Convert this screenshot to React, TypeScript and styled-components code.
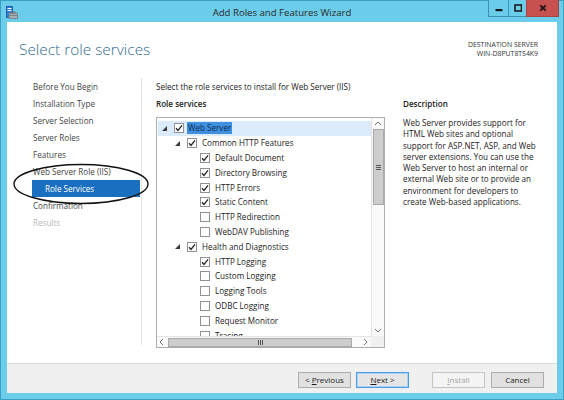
import React from "react";
import styled, { createGlobalStyle } from "styled-components";

const GlobalStyle = createGlobalStyle`
  html, body { margin: 0; padding: 0; width: 564px; height: 400px; overflow: hidden; }
  body { font-family: "Open Sans", "Noto Sans", sans-serif; color: #222; }
  * { box-sizing: border-box; }
`;

const Window = styled.div`
  width: 564px;
  height: 400px;
  background: #6bcdea;
  border: 1px solid #3e9fc4;
  display: flex;
  flex-direction: column;
`;

const TitleBar = styled.div`
  height: 21px;
  flex: none;
  display: grid;
  grid-template-columns: 1fr auto 1fr;
  align-items: center;
`;

const TitleIcon = styled.div`
  display: flex;
  align-items: center;
  padding-left: 5px;
  padding-top: 1px;
`;

const TitleText = styled.div`
  font-size: 9.6px;
  color: #2a2a2a;
  padding-top: 1px;
`;

const WinButtons = styled.div`
  justify-self: end;
  align-self: start;
  display: flex;
  margin-right: 4px;
  margin-top: -1px;
`;

const WinButton = styled.div<{ $w: number; $close?: boolean }>`
  width: ${(p) => p.$w}px;
  height: 17px;
  display: flex;
  align-items: center;
  justify-content: center;
  background: ${(p) => (p.$close ? "#c75050" : "#6bcdea")};
  border: 1px solid ${(p) => (p.$close ? "#a84444" : "#3d93b6")};
  border-top: none;
  margin-left: -1px;
`;

const Client = styled.div`
  flex: 1;
  margin: 0 6px 6px 6px;
  background: #fff;
  display: flex;
  flex-direction: column;
`;

const Content = styled.div`
  position: relative;
  flex: 1;
  display: flex;
  flex-direction: column;
`;

const Header = styled.div`
  height: 56px;
  flex: none;
  display: flex;
  justify-content: space-between;
  align-items: flex-start;
  padding: 18px 19px 0 12px;
`;

const Heading = styled.h1`
  margin: 0;
  font-size: 15.4px;
  line-height: 20px;
  font-weight: 300;
  color: #2f6d92;
`;

const Destination = styled.div`
  margin-top: 0px;
  text-align: right;
  font-size: 6.9px;
  line-height: 9px;
  color: #333;
`;

const Body = styled.div`
  height: 267px;
  flex: none;
  display: flex;
`;

const Nav = styled.div`
  width: 135px;
  flex: none;
  padding-left: 25px;
  border-right: 1px solid #e2e2e2;
`;

const NavItem = styled.div<{ $active?: boolean; $sub?: boolean; $disabled?: boolean }>`
  width: 108px;
  height: 17px;
  line-height: 17px;
  font-size: 8.1px;
  padding-left: ${(p) => (p.$sub ? 13 : 1)}px;
  color: ${(p) => (p.$active ? "#fff" : p.$disabled ? "#b9b9b9" : "#444")};
  background: ${(p) => (p.$active ? "#1b6fc0" : "transparent")};
  white-space: nowrap;
`;

const Main = styled.div`
  flex: 1;
  padding-left: 14px;
  display: flex;
  flex-direction: column;
`;

const Instruction = styled.div`
  margin-top: 2px;
  font-size: 8.1px;
  line-height: 14px;
  color: #222;
`;

const Columns = styled.div`
  display: flex;
  margin-top: 3px;
`;

const TreeCol = styled.div`
  width: 229px;
  flex: none;
  display: flex;
  flex-direction: column;
`;

const DescCol = styled.div`
  margin-left: 18px;
  display: flex;
  flex-direction: column;
`;

const Label = styled.div`
  font-size: 8.1px;
  line-height: 14px;
  font-weight: 600;
  color: #222;
  margin-bottom: 6px;
`;

const DescText = styled.div`
  font-size: 8.1px;
  line-height: 11.3px;
  color: #222;
  white-space: nowrap;
`;

const DescLine = styled.span`
  display: block;
`;

const TreeBox = styled.div`
  height: 231px;
  border: 1px solid #abadb3;
  display: grid;
  grid-template-columns: 1fr 13px;
  grid-template-rows: 1fr 11px;
`;

const TreeList = styled.div`
  overflow: hidden;
  padding-top: 3px;
`;

const Row = styled.div<{ $level: number; $selected?: boolean }>`
  height: 14.8px;
  display: flex;
  align-items: center;
  padding-left: ${(p) => 1 + p.$level * 13}px;
  margin-left: 1px;
  background: ${(p) => (p.$selected ? "#dcebfc" : "transparent")};
  font-size: 8.1px;
  color: #222;
  white-space: nowrap;
`;

const Expander = styled.div`
  width: 15px;
  flex: none;
  display: flex;
  align-items: center;
  padding-left: 3px;
`;

const Spacer = styled.div`
  width: 15px;
  flex: none;
`;

const Check = styled.div`
  width: 10px;
  height: 10px;
  flex: none;
  border: 1px solid #929292;
  background: #fff;
  display: flex;
  align-items: center;
  justify-content: center;
  margin-right: 4px;
`;

const RowLabel = styled.span<{ $selected?: boolean }>`
  padding: 0 1px;
  line-height: 12px;
  background: ${(p) => (p.$selected ? "#3f90df" : "transparent")};
  color: ${(p) => (p.$selected ? "#0e2a52" : "#222")};
  margin-left: ${(p) => (p.$selected ? -1 : 0)}px;
`;

const VScroll = styled.div`
  background: #fafafa;
  border-left: 1px solid #e3e3e3;
  display: flex;
  flex-direction: column;
  align-items: center;
`;

const ArrowCell = styled.div<{ $size: number }>`
  width: ${(p) => p.$size}px;
  height: ${(p) => p.$size}px;
  flex: none;
  display: flex;
  align-items: center;
  justify-content: center;
`;

const VThumb = styled.div`
  width: 11px;
  height: 76px;
  background: #cdcdcd;
  border: 1px solid #a9a9a9;
  display: flex;
  align-items: center;
  justify-content: center;
`;

const VTrack = styled.div`
  flex: 1;
`;

const HScroll = styled.div`
  background: #fafafa;
  border-top: 1px solid #e3e3e3;
  display: flex;
  align-items: center;
`;

const HThumb = styled.div`
  width: 184px;
  height: 9px;
  margin-left: 1px;
  background: #cdcdcd;
  border: 1px solid #a9a9a9;
  display: flex;
  align-items: center;
  justify-content: center;
`;

const HTrack = styled.div`
  flex: 1;
`;

const Corner = styled.div`
  background: #f0f0f0;
`;

const Footer = styled.div`
  height: 30px;
  flex: none;
  background: #f0f0f0;
  border-top: 1px solid #dadada;
  display: flex;
  align-items: center;
  justify-content: flex-end;
  padding: 2px 13px 0 0;
`;

const Button = styled.div<{ $primary?: boolean; $disabled?: boolean; $gap: number }>`
  width: 53px;
  height: 16px;
  margin-left: ${(p) => p.$gap}px;
  display: flex;
  align-items: center;
  justify-content: center;
  font-size: 8px;
  color: ${(p) => (p.$disabled ? "#a6a6a6" : "#1a1a1a")};
  background: ${(p) => (p.$disabled ? "#f4f4f4" : p.$primary ? "#e5e5e5" : "#e1e1e1")};
  border: 1px solid ${(p) => (p.$disabled ? "#c4c4c4" : p.$primary ? "#4a9de4" : "#acacac")};
  box-shadow: ${(p) => (p.$primary ? "inset 0 0 0 1px #a9d3f5" : "none")};
`;

const Annotation = styled.svg`
  position: absolute;
  left: 5px;
  top: 141px;
  overflow: visible;
`;

const Chevron = ({ dir }: { dir: "up" | "down" | "left" | "right" }) => {
  const paths: Record<string, string> = {
    up: "M1 5 L4 2 L7 5",
    down: "M1 2 L4 5 L7 2",
    left: "M5 1 L2 4 L5 7",
    right: "M2 1 L5 4 L2 7",
  };
  return (
    <svg width="8" height="8" viewBox="0 0 8 8">
      <path d={paths[dir]} fill="none" stroke="#707070" strokeWidth="1" />
    </svg>
  );
};

const CheckMark = () => (
  <svg width="8" height="8" viewBox="0 0 8 8">
    <path d="M1 4.2 L3 6.4 L7 1.4" fill="none" stroke="#222" strokeWidth="1.3" />
  </svg>
);

const ExpandArrow = () => (
  <svg width="5" height="5" viewBox="0 0 5 5">
    <polygon points="5,0 5,5 0,5" fill="#3a3a3a" />
  </svg>
);

type Item = { label: string; level: number; checked: boolean; expandable?: boolean; selected?: boolean };

const items: Item[] = [
  { label: "Web Server", level: 0, checked: true, expandable: true, selected: true },
  { label: "Common HTTP Features", level: 1, checked: true, expandable: true },
  { label: "Default Document", level: 2, checked: true },
  { label: "Directory Browsing", level: 2, checked: true },
  { label: "HTTP Errors", level: 2, checked: true },
  { label: "Static Content", level: 2, checked: true },
  { label: "HTTP Redirection", level: 2, checked: false },
  { label: "WebDAV Publishing", level: 2, checked: false },
  { label: "Health and Diagnostics", level: 1, checked: true, expandable: true },
  { label: "HTTP Logging", level: 2, checked: true },
  { label: "Custom Logging", level: 2, checked: false },
  { label: "Logging Tools", level: 2, checked: false },
  { label: "ODBC Logging", level: 2, checked: false },
  { label: "Request Monitor", level: 2, checked: false },
  { label: "Tracing", level: 2, checked: false },
];

const navItems = [
  { label: "Before You Begin" },
  { label: "Installation Type" },
  { label: "Server Selection" },
  { label: "Server Roles" },
  { label: "Features" },
  { label: "Web Server Role (IIS)" },
  { label: "Role Services", active: true, sub: true },
  { label: "Confirmation" },
  { label: "Results", disabled: true },
];

const descLines = [
  "Web Server provides support for",
  "HTML Web sites and optional",
  "support for ASP.NET, ASP, and Web",
  "server extensions. You can use the",
  "Web Server to host an internal or",
  "external Web site or to provide an",
  "environment for developers to",
  "create Web-based applications.",
];

export default function App() {
  return (
    <>
      <GlobalStyle />
      <Window>
        <TitleBar>
          <TitleIcon>
            <svg width="12" height="13" viewBox="0 0 12 13">
              <rect x="0.5" y="0.5" width="6" height="11" fill="#2e7fd3" stroke="#1d5fa8" />
              <rect x="1.5" y="2" width="4" height="1" fill="#fff" />
              <rect x="1.5" y="4" width="4" height="1" fill="#fff" />
              <rect x="3" y="7" width="8.5" height="5.5" rx="0.5" fill="#a8b0b6" stroke="#6f777d" strokeWidth="0.8" />
              <rect x="5.5" y="5.8" width="3.5" height="1.4" fill="none" stroke="#6f777d" strokeWidth="0.8" />
              <rect x="3" y="9" width="8.5" height="0.8" fill="#6f777d" />
            </svg>
          </TitleIcon>
          <TitleText>Add Roles and Features Wizard</TitleText>
          <WinButtons>
            <WinButton $w={21}>
              <svg width="8" height="8" viewBox="0 0 8 8">
                <rect x="0.5" y="5" width="7" height="2.2" fill="#1a1a1a" />
              </svg>
            </WinButton>
            <WinButton $w={19}>
              <svg width="8" height="8" viewBox="0 0 8 8">
                <rect x="1" y="1" width="6.5" height="6" fill="none" stroke="#1a1a1a" strokeWidth="1.6" />
              </svg>
            </WinButton>
            <WinButton $w={33} $close>
              <svg width="8" height="8" viewBox="0 0 8 8">
                <path d="M1.3 1.3 L6.7 6.7 M6.7 1.3 L1.3 6.7" stroke="#1f1414" strokeWidth="1.8" />
              </svg>
            </WinButton>
          </WinButtons>
        </TitleBar>
        <Client>
          <Content>
            <Header>
              <Heading>Select role services</Heading>
              <Destination>
                <div>DESTINATION SERVER</div>
                <div>WIN-D8PUT8TS4K9</div>
              </Destination>
            </Header>
            <Body>
              <Nav>
                {navItems.map((n) => (
                  <NavItem key={n.label} $active={n.active} $sub={n.sub} $disabled={n.disabled}>
                    {n.label}
                  </NavItem>
                ))}
              </Nav>
              <Main>
                <Instruction>Select the role services to install for Web Server (IIS)</Instruction>
                <Columns>
                  <TreeCol>
                    <Label>Role services</Label>
                    <TreeBox>
                      <TreeList>
                        {items.map((it) => (
                          <Row key={it.label} $level={it.level} $selected={it.selected}>
                            {it.expandable ? (
                              <Expander>
                                <ExpandArrow />
                              </Expander>
                            ) : (
                              <Spacer />
                            )}
                            <Check>{it.checked && <CheckMark />}</Check>
                            <RowLabel $selected={it.selected}>{it.label}</RowLabel>
                          </Row>
                        ))}
                      </TreeList>
                      <VScroll>
                        <ArrowCell $size={11}>
                          <Chevron dir="up" />
                        </ArrowCell>
                        <VThumb>
                          <svg width="5" height="5" viewBox="0 0 5 5">
                            <path d="M0 0.5 H5 M0 2.5 H5 M0 4.5 H5" stroke="#555" strokeWidth="1" />
                          </svg>
                        </VThumb>
                        <VTrack />
                        <ArrowCell $size={11}>
                          <Chevron dir="down" />
                        </ArrowCell>
                      </VScroll>
                      <HScroll>
                        <ArrowCell $size={10}>
                          <Chevron dir="left" />
                        </ArrowCell>
                        <HThumb>
                          <svg width="5" height="5" viewBox="0 0 5 5">
                            <path d="M0.5 0 V5 M2.5 0 V5 M4.5 0 V5" stroke="#555" strokeWidth="1" />
                          </svg>
                        </HThumb>
                        <HTrack />
                        <ArrowCell $size={10}>
                          <Chevron dir="right" />
                        </ArrowCell>
                      </HScroll>
                      <Corner />
                    </TreeBox>
                  </TreeCol>
                  <DescCol>
                    <Label>Description</Label>
                    <DescText>
                      {descLines.map((l) => (
                        <DescLine key={l}>{l}</DescLine>
                      ))}
                    </DescText>
                  </DescCol>
                </Columns>
              </Main>
            </Body>
            <Annotation width="138" height="42" viewBox="0 0 138 42">
              <ellipse cx="69" cy="21" rx="67" ry="19.5" fill="none" stroke="#111" strokeWidth="1.4" />
            </Annotation>
          </Content>
          <Footer>
            <Button $gap={0}>
              &lt;&nbsp;<u>P</u>revious
            </Button>
            <Button $gap={5} $primary>
              <u>N</u>ext&nbsp;&gt;
            </Button>
            <Button $gap={23} $disabled>
              <u>I</u>nstall
            </Button>
            <Button $gap={6}>Cancel</Button>
          </Footer>
        </Client>
      </Window>
    </>
  );
}
